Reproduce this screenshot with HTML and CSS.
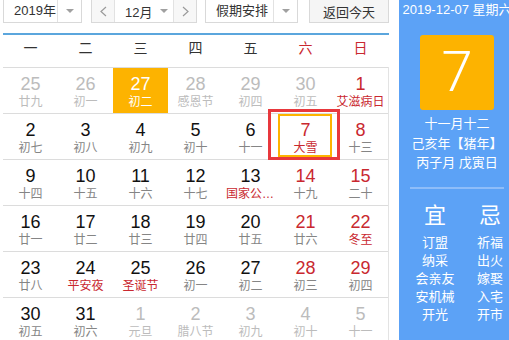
FILE: index.html
```html
<!DOCTYPE html>
<html lang="zh-CN">
<head>
  <meta charset="UTF-8">
  <meta name="viewport" content="width=device-width, initial-scale=1.0">
  <title>万年历</title>
  <link rel="stylesheet" href="styles.css">
</head>
<body>
  <main class="page">
    <section class="cal">
      <div class="toolbar">
        <div class="select year">
          <span class="label">2019年</span>
          <span class="arrow"></span>
        </div>
        <div class="month-group">
          <button type="button" class="step">
            <svg width="7" height="11" viewBox="0 0 7 11"><polyline points="6,1 1,5.5 6,10" fill="none" stroke="#9a9a9a" stroke-width="1.2"/></svg>
          </button>
          <div class="month">
            <span>12月</span>
            <span class="tri"></span>
          </div>
          <button type="button" class="step">
            <svg width="7" height="11" viewBox="0 0 7 11"><polyline points="1,1 6,5.5 1,10" fill="none" stroke="#9a9a9a" stroke-width="1.2"/></svg>
          </button>
        </div>
        <div class="select holiday">
          <span class="label">假期安排</span>
          <span class="arrow"></span>
        </div>
        <button type="button" class="today-btn">返回今天</button>
      </div>

      <div class="week">
        <span>一</span><span>二</span><span>三</span><span>四</span><span>五</span><span class="red">六</span><span class="red">日</span>
      </div>

      <div class="grid">
        <div class="row">
          <div class="cell other"><b>25</b><i>廿九</i></div>
          <div class="cell other"><b>26</b><i>初一</i></div>
          <div class="cell hover"><b>27</b><i>初二</i></div>
          <div class="cell other"><b>28</b><i>感恩节</i></div>
          <div class="cell other"><b>29</b><i>初四</i></div>
          <div class="cell other"><b>30</b><i>初五</i></div>
          <div class="cell rest"><b>1</b><i class="fest">艾滋病日</i></div>
        </div>
        <div class="row">
          <div class="cell"><b>2</b><i>初七</i></div>
          <div class="cell"><b>3</b><i>初八</i></div>
          <div class="cell"><b>4</b><i>初九</i></div>
          <div class="cell"><b>5</b><i>初十</i></div>
          <div class="cell"><b>6</b><i>十一</i></div>
          <div class="cell rest today"><b>7</b><i class="fest">大雪</i></div>
          <div class="cell rest"><b>8</b><i>十三</i></div>
        </div>
        <div class="row">
          <div class="cell"><b>9</b><i>十四</i></div>
          <div class="cell"><b>10</b><i>十五</i></div>
          <div class="cell"><b>11</b><i>十六</i></div>
          <div class="cell"><b>12</b><i>十七</i></div>
          <div class="cell"><b>13</b><i class="fest">国家公祭日</i></div>
          <div class="cell rest"><b>14</b><i>十九</i></div>
          <div class="cell rest"><b>15</b><i>二十</i></div>
        </div>
        <div class="row">
          <div class="cell"><b>16</b><i>廿一</i></div>
          <div class="cell"><b>17</b><i>廿二</i></div>
          <div class="cell"><b>18</b><i>廿三</i></div>
          <div class="cell"><b>19</b><i>廿四</i></div>
          <div class="cell"><b>20</b><i>廿五</i></div>
          <div class="cell rest"><b>21</b><i>廿六</i></div>
          <div class="cell rest"><b>22</b><i class="fest">冬至</i></div>
        </div>
        <div class="row">
          <div class="cell"><b>23</b><i>廿八</i></div>
          <div class="cell"><b>24</b><i class="fest">平安夜</i></div>
          <div class="cell"><b>25</b><i class="fest">圣诞节</i></div>
          <div class="cell"><b>26</b><i>初一</i></div>
          <div class="cell"><b>27</b><i>初二</i></div>
          <div class="cell rest"><b>28</b><i>初三</i></div>
          <div class="cell rest"><b>29</b><i>初四</i></div>
        </div>
        <div class="row">
          <div class="cell"><b>30</b><i>初五</i></div>
          <div class="cell"><b>31</b><i>初六</i></div>
          <div class="cell other"><b>1</b><i>元旦</i></div>
          <div class="cell other"><b>2</b><i>腊八节</i></div>
          <div class="cell other"><b>3</b><i>初九</i></div>
          <div class="cell other"><b>4</b><i>初十</i></div>
          <div class="cell other"><b>5</b><i>十一</i></div>
        </div>
      </div>
    </section>

    <aside class="side">
      <div class="side-date">2019-12-07 星期六</div>
      <div class="big-day">7</div>
      <div class="lunar">
        <p>十一月十二</p>
        <p>己亥年【猪年】</p>
        <p>丙子月 戊寅日</p>
      </div>
      <div class="divider"></div>
      <div class="yiji">
        <div class="col">
          <h3>宜</h3>
          <p>订盟</p>
          <p>纳采</p>
          <p>会亲友</p>
          <p>安机械</p>
          <p>开光</p>
        </div>
        <div class="col">
          <h3>忌</h3>
          <p>祈福</p>
          <p>出火</p>
          <p>嫁娶</p>
          <p>入宅</p>
          <p>开市</p>
        </div>
      </div>
    </aside>
  </main>
</body>
</html>
```

FILE: styles.css
```css
* {
  box-sizing: border-box;
}

html, body {
  margin: 0;
  overflow: hidden;
}

body {
  font-family: "Liberation Sans", "Noto Sans CJK SC", sans-serif;
  color: #333;
  background: #fff;
}

.page {
  display: flex;
  align-items: flex-start;
}

.cal {
  width: 386px;
  margin-left: 3px;
}

/* toolbar */

.toolbar {
  display: flex;
  height: 24px;
  margin-top: -1px;
  font-size: 13px;
}

.select {
  display: flex;
  height: 100%;
  border: 1px solid #d9d9d9;
  background: #fff;
}

.select .label {
  flex: 1;
  padding-left: 10px;
  line-height: 22px;
}

.select .arrow {
  width: 24px;
  border-left: 1px solid #e2e2e2;
  display: flex;
  align-items: center;
  justify-content: center;
}

.arrow::after,
.tri::after {
  content: "";
  display: block;
  border: 4px solid transparent;
  border-top-color: #a0a0a0;
  border-bottom: 0;
}

.year {
  width: 79px;
}

.month-group {
  display: flex;
  height: 100%;
  margin-left: 9px;
  border: 1px solid #d9d9d9;
}

.step {
  width: 22px;
  padding: 0;
  margin: 0;
  border: 0;
  background: #f7f7f7;
  display: flex;
  align-items: center;
  justify-content: center;
}

.month {
  width: 60px;
  display: flex;
  align-items: center;
  padding-left: 10px;
  gap: 8px;
  border-left: 1px solid #e2e2e2;
  border-right: 1px solid #e2e2e2;
  background: #fff;
}

.holiday {
  width: 93px;
  margin-left: 8px;
}

.today-btn {
  width: 80px;
  height: 100%;
  margin-left: 11px;
  padding: 0;
  font-family: inherit;
  font-size: 13px;
  color: #333;
  background: #f5f5f5;
  border: 1px solid #d9d9d9;
}

/* weekdays */

.week {
  display: grid;
  grid-template-columns: repeat(7, 55px);
  margin-top: 10px;
  height: 34px;
  border-top: 2px solid #5ba6dd;
  font-size: 14px;
  line-height: 26px;
  text-align: center;
  color: #333;
}

.red {
  color: #c9282f;
}

/* days */

.grid {
  width: 386px;
  border-right: 1px solid #e3e3e3;
}

.row {
  display: grid;
  grid-template-columns: repeat(7, 55px);
  height: 46px;
  border-top: 1px solid #dcdcdc;
}

.cell {
  position: relative;
  padding: 6px 3px 0;
  text-align: center;
  overflow: visible;
}

.cell b {
  display: block;
  font-weight: normal;
  font-size: 18px;
  line-height: 20px;
  color: #111;
}

.cell i {
  display: block;
  font-style: normal;
  font-size: 12px;
  line-height: 16px;
  color: #858585;
  white-space: nowrap;
  overflow: hidden;
  text-overflow: ellipsis;
}

.cell.rest b,
.cell i.fest {
  color: #c9282f;
}

.cell.other b,
.cell.other i {
  color: #bcbcbc;
}

.cell.hover {
  background: #fdb300;
}

.cell.hover b,
.cell.hover i {
  color: #fff;
}

.cell.today::before {
  content: "";
  position: absolute;
  top: 0;
  left: 0;
  right: 1px;
  bottom: 2px;
  border: 2px solid #fdb300;
}

.cell.today::after {
  content: "";
  position: absolute;
  top: -5px;
  left: -10px;
  right: -7px;
  bottom: -1px;
  border: 3px solid #e8383d;
  z-index: 2;
}

/* right panel */

.side {
  width: 132px;
  min-height: 360px;
  margin-left: 10px;
  background: #5ca2f6;
  color: #fff;
  text-align: center;
}

.side-date {
  font-size: 13px;
  line-height: 20px;
  white-space: nowrap;
}

.big-day {
  width: 74px;
  height: 75px;
  margin: 15px auto 0;
  background: #fdb300;
  border-radius: 3px;
  font-family: Roboto, "Liberation Sans", sans-serif;
  font-weight: 300;
  font-size: 56px;
  line-height: 75px;
}

.lunar {
  margin-top: 4px;
  font-size: 13px;
  line-height: 19.5px;
}

.lunar p {
  margin: 0;
  white-space: nowrap;
}

.divider {
  height: 2px;
  margin: 14px 11px 0;
  background: #8ebdf9;
}

.yiji {
  display: grid;
  grid-template-columns: 50px 50px;
  gap: 5px;
  padding-left: 11px;
  margin-top: 12px;
}

.yiji h3 {
  margin: 0 0 3px;
  font-weight: normal;
  font-size: 22px;
  line-height: 30px;
}

.yiji p {
  margin: 0;
  font-size: 13px;
  line-height: 18px;
  white-space: nowrap;
}
```
